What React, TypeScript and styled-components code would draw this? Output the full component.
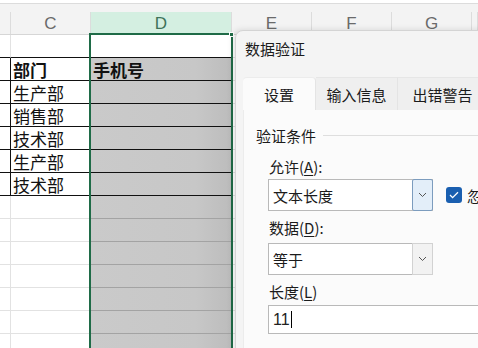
import React from 'react';
import styled, { createGlobalStyle } from 'styled-components';

const GlobalStyle = createGlobalStyle`
  html, body {
    margin: 0;
    padding: 0;
    background: #ffffff;
  }
  * {
    box-sizing: border-box;
  }
`;

const COLUMNS = '11px 80px 141px 80px 80px 80px 6px';
const CJK = `"Noto Sans CJK SC", "Noto Sans", sans-serif`;

type CellTone = 'plain' | 'table' | 'selected' | 'selectedTable' | 'active';

const Page = styled.div`
  position: relative;
  width: 478px;
  height: 348px;
  overflow: hidden;
  background: #fff;
  font-family: ${CJK};
`;

const TopStrip = styled.div`
  height: 12px;
  border-top: 3px solid #ffffff;
  background: #f3f3f3;
  box-shadow: inset 0 1px 0 #dcdcdc;
`;

const HeaderRow = styled.div`
  display: grid;
  grid-template-columns: ${COLUMNS};
  height: 23px;
  background: #f3f3f3;
  border-bottom: 1px solid #d6d6d6;
`;

const HeaderCell = styled.div<{ $active?: boolean }>`
  display: flex;
  align-items: center;
  justify-content: center;
  border-right: 1px solid #dcdcdc;
  background: ${(p) => (p.$active ? '#d4efe1' : 'transparent')};
  color: ${(p) => (p.$active ? '#3f735a' : '#6a6a6a')};
  font-family: "Liberation Sans", Arial, sans-serif;
  font-size: 17px;
  line-height: 1;
`;

const Row = styled.div`
  display: grid;
  grid-template-columns: ${COLUMNS};
  height: 23px;
`;

const GRAY = 'linear-gradient(to right, #cacaca 0%, #c7c7c7 75%, #bcbcbc 100%)';

const toneBg: Record<CellTone, string> = {
  plain: '#ffffff',
  table: '#ffffff',
  selected: GRAY,
  selectedTable: GRAY,
  active: '#ffffff',
};

const toneLine: Record<CellTone, string> = {
  plain: '#e2e2e2',
  table: '#111111',
  selected: '#a3a3a3',
  selectedTable: '#111111',
  active: '#111111',
};

const Cell = styled.div<{ $tone: CellTone; $vline?: string; $bold?: boolean }>`
  display: flex;
  align-items: center;
  padding-left: 2px;
  background: ${(p) => toneBg[p.$tone]};
  border-bottom: 1px solid ${(p) => toneLine[p.$tone]};
  border-right: 1px solid ${(p) => p.$vline || '#e2e2e2'};
  color: #111;
  font-size: 17px;
  font-weight: ${(p) => (p.$bold ? 700 : 400)};
  line-height: 1;
  white-space: nowrap;
  overflow: hidden;
`;

const SelectionFrame = styled.div`
  position: absolute;
  left: 89px;
  top: 33px;
  width: 144px;
  height: 340px;
  border: 2px solid #1f6b47;
  pointer-events: none;
`;

const FillHandle = styled.div`
  position: absolute;
  left: 229px;
  top: 32px;
  width: 5px;
  height: 5px;
  background: #1f6b47;
  border: 1px solid #fff;
`;

/* dialog */

const Dialog = styled.div`
  position: absolute;
  left: 235px;
  top: 30px;
  width: 300px;
  height: 340px;
  background: #f4f4f4;
  border: 1px solid #d4d4d4;
  border-radius: 8px 0 0 0;
  box-shadow: -2px 0 6px rgba(0, 0, 0, 0.12);
  display: flex;
  flex-direction: column;
  color: #1b1b1b;
  font-family: ${CJK};
`;

const Title = styled.div`
  padding: 8px 0 0 9px;
  height: 46px;
  font-size: 15px;
  line-height: 20px;
`;

const Tabs = styled.div`
  display: flex;
  padding-left: 7px;
  height: 33px;
`;

const Tab = styled.div<{ $active?: boolean; $w: number }>`
  width: ${(p) => p.$w}px;
  flex-shrink: 0;
  display: flex;
  align-items: center;
  justify-content: center;
  font-size: 15px;
  background: ${(p) => (p.$active ? '#fbfbfb' : '#efefef')};
  border-right: 1px solid #e4e4e4;
  border-top: 1px solid ${(p) => (p.$active ? '#ececec' : '#e6e6e6')};
  border-radius: ${(p) => (p.$active ? '4px 4px 0 0' : '0')};
`;

const Panel = styled.div`
  flex: 1;
  margin-left: 7px;
  padding: 15px 0 0 12px;
  background: #fbfbfb;
  border-left: 1px solid #ececec;
  display: flex;
  flex-direction: column;
`;

const Legend = styled.div`
  display: flex;
  align-items: center;
  gap: 7px;
  height: 20px;
  font-size: 15px;

  &::after {
    content: '';
    flex: 1;
    height: 1px;
    background: #dedede;
  }
`;

const Group = styled.div`
  display: flex;
  flex-direction: column;
  padding-left: 12px;
`;

const Label = styled.div<{ $gap: number }>`
  margin-top: ${(p) => p.$gap}px;
  height: 20px;
  line-height: 20px;
  font-size: 15px;
  padding-left: 1px;

  u {
    text-decoration-thickness: 1px;
    text-underline-offset: 2px;
  }
`;

const FieldLine = styled.div<{ $gap: number }>`
  margin-top: ${(p) => p.$gap}px;
  display: flex;
  align-items: center;
  gap: 13px;
`;

const Select = styled.div`
  width: 165px;
  height: 32px;
  flex-shrink: 0;
  display: flex;
  background: #ffffff;
  border: 1px solid #b9b9b9;
`;

const SelectValue = styled.div`
  flex: 1;
  display: flex;
  align-items: center;
  padding-left: 4px;
  font-size: 15px;
`;

const SelectButton = styled.div<{ $focused?: boolean }>`
  width: 21px;
  display: flex;
  align-items: center;
  justify-content: center;
  background: ${(p) => (p.$focused ? '#e3eef9' : '#f2f2f2')};
  border: 1px solid ${(p) => (p.$focused ? '#7c9cbe' : '#d2d2d2')};
  margin: -1px -1px -1px 0;
  border-radius: ${(p) => (p.$focused ? '2px' : '0')};
`;

const Check = styled.div`
  display: flex;
  align-items: center;
  gap: 5px;
  flex-shrink: 0;
  font-size: 15px;
  white-space: nowrap;
`;

const CheckBox = styled.div`
  width: 16px;
  height: 16px;
  border-radius: 3px;
  background: #1a5fb0;
  display: flex;
  align-items: center;
  justify-content: center;
`;

const TextInput = styled.div`
  width: 260px;
  height: 29px;
  flex-shrink: 0;
  display: flex;
  align-items: center;
  padding-left: 4px;
  background: #ffffff;
  border: 1px solid #b9b9b9;
  font-family: "Liberation Sans", Arial, sans-serif;
  font-size: 16px;
  color: #222;
`;

const Caret = styled.span`
  display: inline-block;
  width: 1px;
  height: 17px;
  margin-left: 1px;
  background: #000;
`;

const Chevron = () => (
  <svg width="9" height="6" viewBox="0 0 9 6">
    <path d="M1 1l3.5 3.5L8 1" fill="none" stroke="#555" strokeWidth="1" />
  </svg>
);

const Tick = () => (
  <svg width="10" height="8" viewBox="0 0 10 8">
    <path d="M1 4l2.6 2.6L9 1.2" fill="none" stroke="#fff" strokeWidth="1.3" />
  </svg>
);

const departments = ['部门', '生产部', '销售部', '技术部', '生产部', '技术部'];
const headers = ['', 'C', 'D', 'E', 'F', 'G', ''];
const ROW_COUNT = 14;

const App: React.FC = () => {
  const rows = Array.from({ length: ROW_COUNT }, (_, i) => i);

  return (
    <Page>
      <GlobalStyle />
      <TopStrip />
      <HeaderRow>
        {headers.map((h, i) => (
          <HeaderCell key={i} $active={h === 'D'}>
            {h}
          </HeaderCell>
        ))}
      </HeaderRow>
      {rows.map((r) => {
        const inTable = r >= 1 && r <= 6;
        const lineTone: CellTone = r <= 6 ? 'table' : 'plain';
        const dTone: CellTone =
          r === 0 ? 'active' : inTable ? 'selectedTable' : 'selected';
        return (
          <Row key={r}>
            <Cell $tone={lineTone} $vline={inTable ? '#111' : undefined} />
            <Cell
              $tone={lineTone}
              $vline={inTable ? '#111' : undefined}
              $bold={r === 1}
            >
              {inTable ? departments[r - 1] : ''}
            </Cell>
            <Cell $tone={dTone} $vline="#111" $bold={r === 1}>
              {r === 1 ? '手机号' : ''}
            </Cell>
            <Cell $tone="plain" />
            <Cell $tone="plain" />
            <Cell $tone="plain" />
            <Cell $tone="plain" />
          </Row>
        );
      })}
      <SelectionFrame />
      <FillHandle />

      <Dialog>
        <Title>数据验证</Title>
        <Tabs>
          <Tab $active $w={73}>
            设置
          </Tab>
          <Tab $w={82}>输入信息</Tab>
          <Tab $w={90}>出错警告</Tab>
        </Tabs>
        <Panel>
          <Legend>验证条件</Legend>
          <Group>
            <Label $gap={12}>
              允许(<u>A</u>):
            </Label>
            <FieldLine $gap={2}>
              <Select>
                <SelectValue>文本长度</SelectValue>
                <SelectButton $focused>
                  <Chevron />
                </SelectButton>
              </Select>
              <Check>
                <CheckBox>
                  <Tick />
                </CheckBox>
                忽略空值
              </Check>
            </FieldLine>
            <Label $gap={7}>
              数据(<u>D</u>):
            </Label>
            <FieldLine $gap={5}>
              <Select>
                <SelectValue>等于</SelectValue>
                <SelectButton>
                  <Chevron />
                </SelectButton>
              </Select>
            </FieldLine>
            <Label $gap={7}>
              长度(<u>L</u>)
            </Label>
            <FieldLine $gap={3}>
              <TextInput>
                11
                <Caret />
              </TextInput>
            </FieldLine>
          </Group>
        </Panel>
      </Dialog>
    </Page>
  );
};

export default App;
